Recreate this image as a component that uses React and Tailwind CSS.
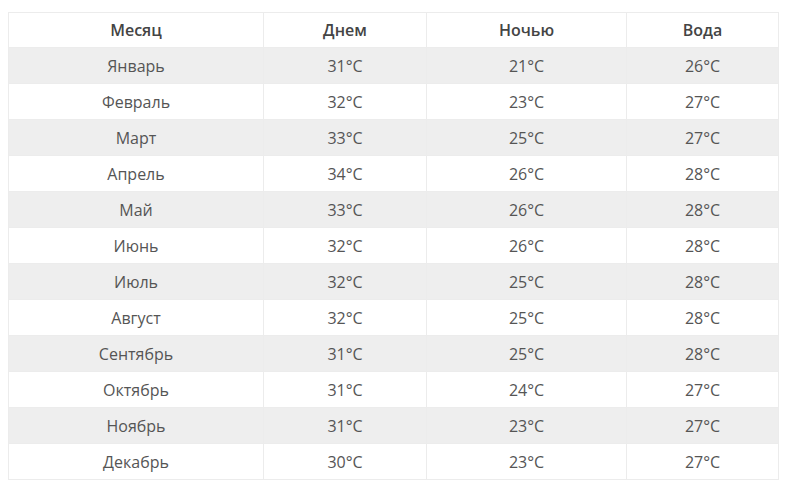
import React from 'react';

const rows = [
  ['Январь', '31°C', '21°C', '26°C'],
  ['Февраль', '32°C', '23°C', '27°C'],
  ['Март', '33°C', '25°C', '27°C'],
  ['Апрель', '34°C', '26°C', '28°C'],
  ['Май', '33°C', '26°C', '28°C'],
  ['Июнь', '32°C', '26°C', '28°C'],
  ['Июль', '32°C', '25°C', '28°C'],
  ['Август', '32°C', '25°C', '28°C'],
  ['Сентябрь', '31°C', '25°C', '28°C'],
  ['Октябрь', '31°C', '24°C', '27°C'],
  ['Ноябрь', '31°C', '23°C', '27°C'],
  ['Декабрь', '30°C', '23°C', '27°C'],
];

export default function App() {
  return (
    <div className="w-[790px] h-[501px] bg-white pt-3 pl-2 font-['Open_Sans',sans-serif] text-[16px] text-[#555]">
      <table className="w-[770px] border-collapse table-fixed">
        <colgroup>
          <col className="w-[255px]" />
          <col className="w-[163px]" />
          <col className="w-[200px]" />
          <col className="w-[152px]" />
        </colgroup>
        <thead>
          <tr className="h-[35px]">
            {['Месяц', 'Днем', 'Ночью', 'Вода'].map((h) => (
              <th key={h} className="border border-[#ececec] font-semibold text-[#444] text-center p-0">
                {h}
              </th>
            ))}
          </tr>
        </thead>
        <tbody>
          {rows.map((row, i) => (
            <tr key={row[0]} className={i % 2 === 0 ? 'h-[36px] bg-[#eeeeee]' : 'h-[36px] bg-white'}>
              {row.map((cell, j) => (
                <td key={j} className="border border-[#ececec] text-center p-0">
                  {cell}
                </td>
              ))}
            </tr>
          ))}
        </tbody>
      </table>
    </div>
  );
}
